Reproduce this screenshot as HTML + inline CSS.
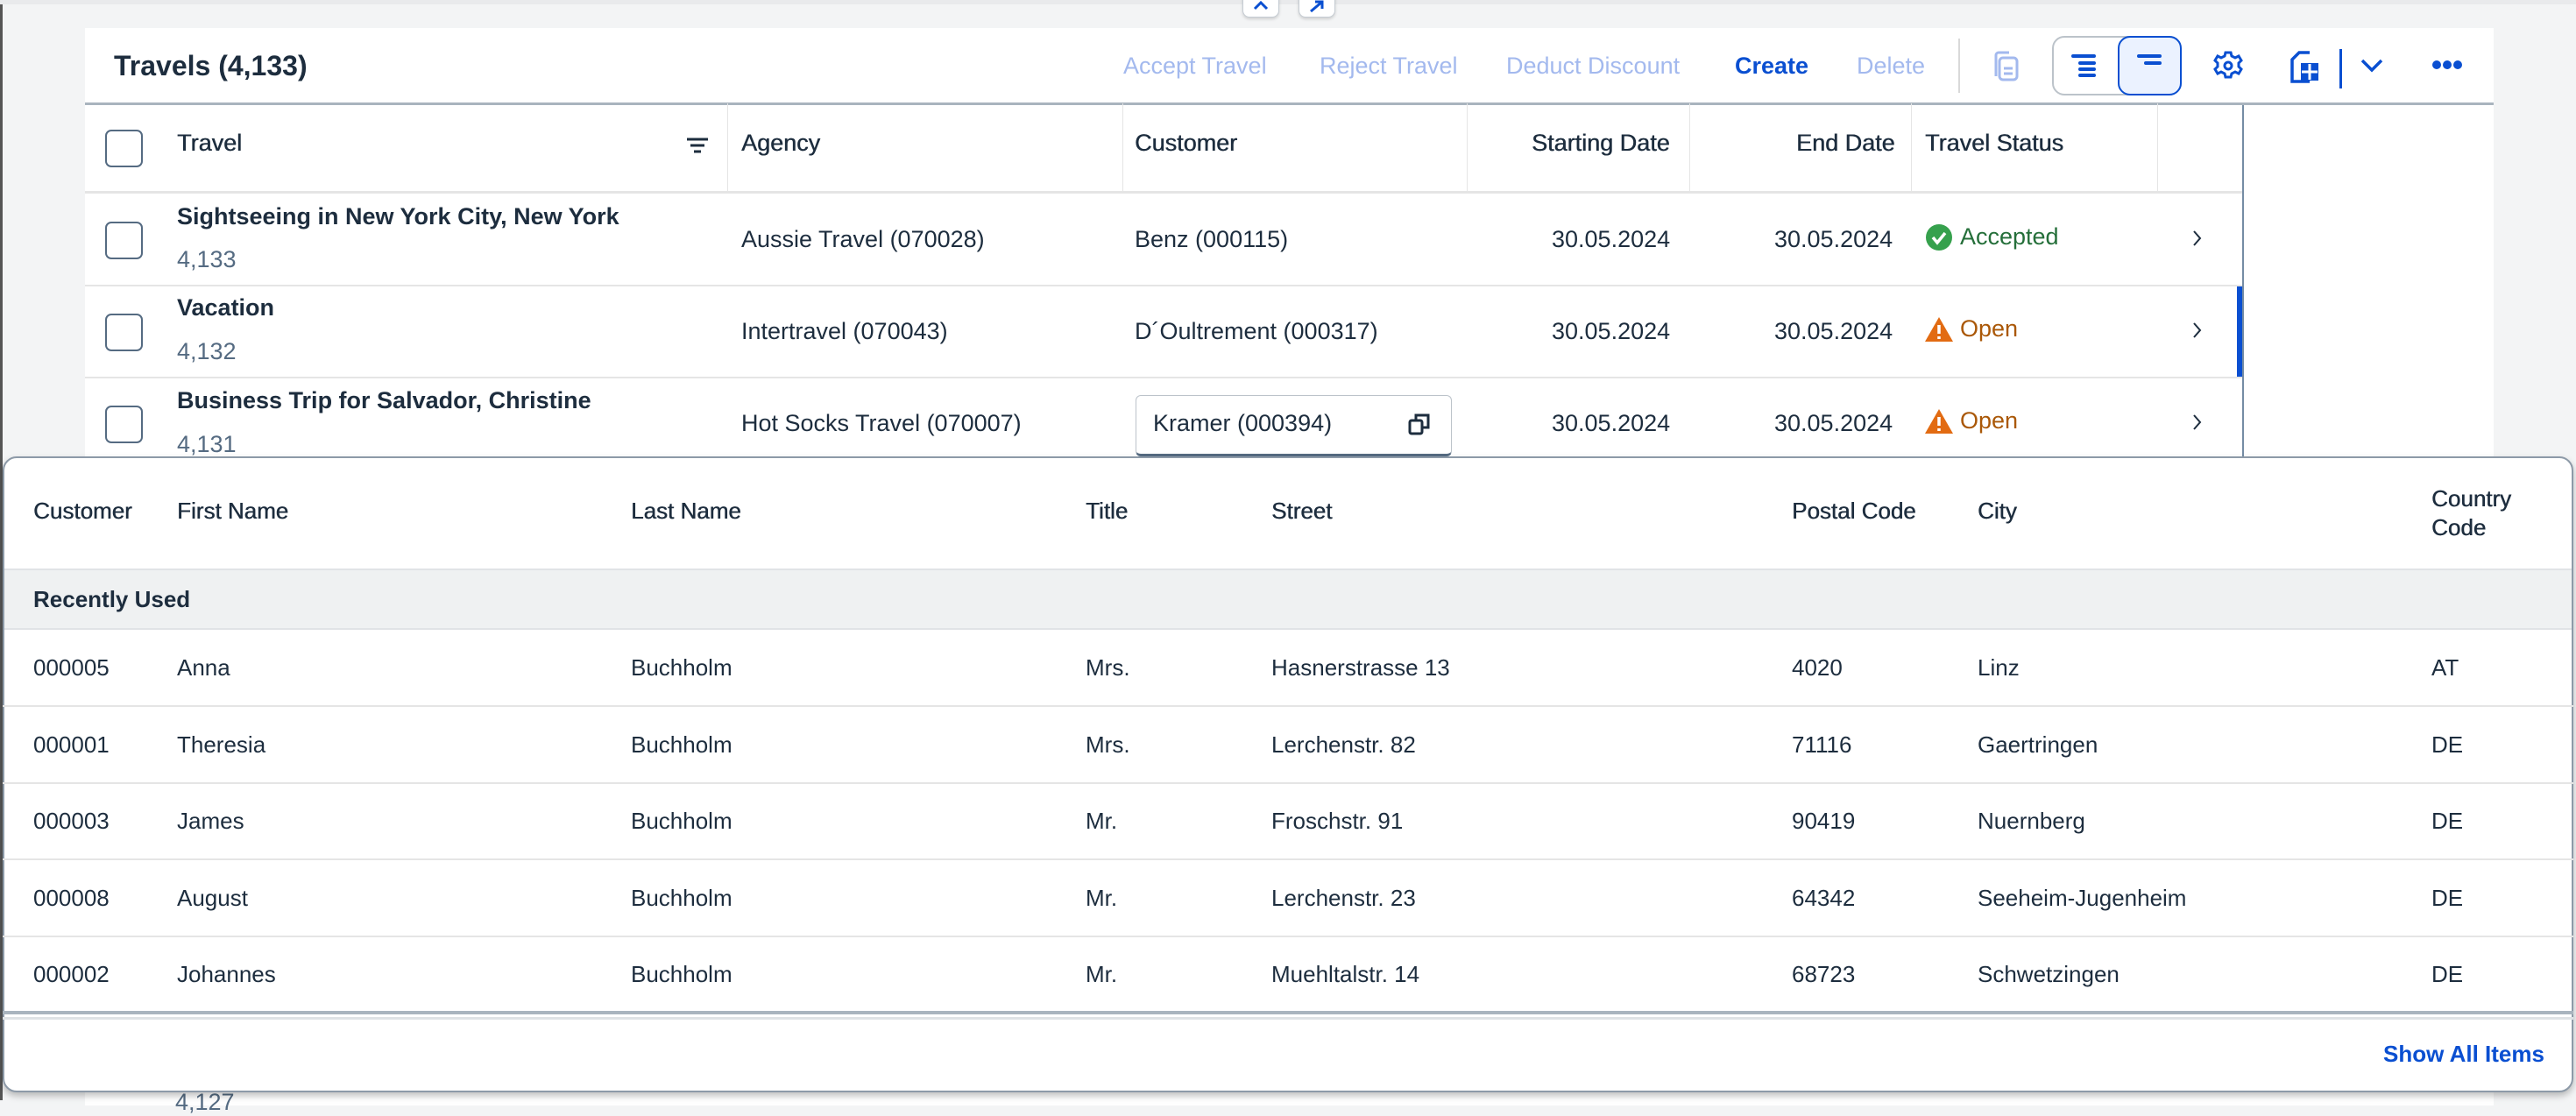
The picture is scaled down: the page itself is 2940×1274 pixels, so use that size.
<!DOCTYPE html>
<html><head><meta charset="utf-8"><style>
*{box-sizing:border-box;margin:0;padding:0}
body{width:2940px;height:1256px;overflow:hidden;background:#f3f4f5;font-family:"Liberation Sans",Arial,sans-serif;color:#1d2d3e;position:relative;font-size:27px}
.a{position:absolute;white-space:nowrap}
.card{position:absolute;left:97px;top:32px;width:2749px;height:1230px;background:#fff}
.tb{color:#a3b9ee;font-size:27px}
.hl{position:absolute;top:118px;height:101px;width:1px;background:#e5e5e5}
.cb{position:absolute;left:120px;width:43px;height:43px;border:2px solid #556b82;border-radius:7px;background:#fff}
.rs{position:absolute;left:97px;width:2462px;height:2px;background:#e5e5e5}
.ph{position:absolute;top:568px;font-size:26px;text-shadow:0.5px 0 0 #1d2d3e}
.th{text-shadow:0.5px 0 0 #1d2d3e}
.pr{position:absolute;left:3px;width:2934px;height:2px;background:#e5e5e5}
</style></head><body>
<div class="a" style="left:0;top:0;width:3px;height:1256px;background:#555"></div>
<div class="a" style="left:0;top:0;width:2940px;height:5px;background:#e9eaec"></div>
<div class="card"></div>
<div class="a" style="left:1418px;top:-10px;width:42px;height:30px;background:#fff;border:1px solid #c5ccd3;border-radius:8px;box-shadow:0 2px 3px rgba(0,0,0,.15)"></div>
<svg class="a" style="left:1429px;top:0px" width="20" height="12" fill="none" stroke="#0a4fd1" stroke-width="3"><path d="M3 10l7-7 7 7"/></svg>
<div class="a" style="left:1482px;top:-10px;width:42px;height:30px;background:#fff;border:1px solid #c5ccd3;border-radius:8px;box-shadow:0 2px 3px rgba(0,0,0,.15)"></div>
<svg class="a" style="left:1493px;top:0px" width="20" height="14" fill="none" stroke="#0a4fd1" stroke-width="3"><path d="M3 13l13-11M8 2h8v8"/></svg>
<div class="a" style="left:130px;top:57px;font-size:32px;font-weight:bold">Travels (4,133)</div>
<div class="a tb" style="left:1282px;top:60px">Accept Travel</div>
<div class="a tb" style="left:1506px;top:60px">Reject Travel</div>
<div class="a tb" style="left:1719px;top:60px">Deduct Discount</div>
<div class="a" style="left:1980px;top:60px;color:#0a4fd1;font-weight:bold;font-size:27px">Create</div>
<div class="a tb" style="left:2119px;top:60px">Delete</div>
<div class="a" style="left:2235px;top:44px;width:2px;height:62px;background:#d9d9d9"></div>
<svg class="a" style="left:2272px;top:57px" width="34" height="36" viewBox="0 0 34 36" fill="none" stroke="#a3b9ee" stroke-width="3"><path d="M6 30V6a3 3 0 0 1 3-3h12"/><rect x="10" y="9" width="20" height="25" rx="4"/><path d="M15 21h10M15 27h10"/></svg>
<div class="a" style="left:2342px;top:41px;width:148px;height:68px;border:2px solid #bcc3ca;border-radius:14px"></div>
<div class="a" style="left:2417px;top:41px;width:73px;height:68px;border:2px solid #0a4fd1;border-radius:14px;background:#ebf2ff"></div>
<svg class="a" style="left:2360px;top:60px" width="40" height="30" viewBox="0 0 40 30" stroke="#0a4fd1" stroke-width="4" stroke-linecap="round"><path d="M6 4h24M14 12h16M14 19h16M14 26h16"/></svg>
<svg class="a" style="left:2435px;top:60px" width="40" height="30" viewBox="0 0 40 30" stroke="#0a4fd1" stroke-width="4" stroke-linecap="round"><path d="M6 4h24M14 12h16"/></svg>
<svg class="a" style="left:2525px;top:57px" width="36" height="36" viewBox="0 0 36 36" fill="none" stroke="#0a4fd1" stroke-width="3"><path d="M15 3h6l1 4 4 2 4-2 3 5-3 3v4l3 3-3 5-4-2-4 2-1 4h-6l-1-4-4-2-4 2-3-5 3-3v-4l-3-3 3-5 4 2 4-2z"/><circle cx="18" cy="18" r="4"/></svg>
<svg class="a" style="left:2612px;top:56px" width="36" height="40" viewBox="0 0 36 40" fill="none" stroke="#0a4fd1" stroke-width="3.5"><path d="M24 4H12L4 12v25h20"/><rect x="14" y="16" width="20" height="20" fill="#0a4fd1" stroke="none"/><path d="M24 17v18M15 26h18" stroke="#fff" stroke-width="3"/></svg>
<div class="a" style="left:2670px;top:56px;width:3px;height:45px;background:#0a4fd1"></div>
<svg class="a" style="left:2693px;top:66px" width="28" height="18" viewBox="0 0 28 18" fill="none" stroke="#0a4fd1" stroke-width="3.5"><path d="M3 3l11 11 11-11"/></svg>
<svg class="a" style="left:2776px;top:67px" width="34" height="14"><circle cx="5" cy="7" r="5" fill="#0a4fd1"/><circle cx="17" cy="7" r="5" fill="#0a4fd1"/><circle cx="29" cy="7" r="5" fill="#0a4fd1"/></svg>
<div class="a" style="left:97px;top:117px;width:2749px;height:3px;background:#a9b4be"></div>
<div class="hl" style="left:830px"></div><div class="hl" style="left:1281px"></div><div class="hl" style="left:1674px"></div><div class="hl" style="left:1928px"></div><div class="hl" style="left:2181px"></div><div class="hl" style="left:2462px"></div>
<div class="a" style="left:2559px;top:120px;width:2px;height:410px;background:#758ca4"></div>
<div class="rs" style="top:218px;height:3px"></div><div class="rs" style="top:325px"></div><div class="rs" style="top:430px"></div>
<div class="cb" style="top:148px"></div>
<div class="a th" style="left:202px;top:148px">Travel</div>
<svg class="a" style="left:782px;top:156px" width="28" height="20" stroke="#1d2d3e" stroke-width="3"><path d="M2 3h24M6 10h16M10 17h8"/></svg>
<div class="a th" style="left:846px;top:148px">Agency</div>
<div class="a th" style="left:1295px;top:148px">Customer</div>
<div class="a th" style="left:1748px;top:148px">Starting Date</div>
<div class="a th" style="left:2050px;top:148px">End Date</div>
<div class="a th" style="left:2197px;top:148px">Travel Status</div>
<div class="cb" style="top:253px"></div><div class="cb" style="top:358px"></div><div class="cb" style="top:463px"></div>
<div class="a" style="left:202px;top:232px;font-weight:bold">Sightseeing in New York City, New York</div>
<div class="a" style="left:202px;top:281px;color:#556b82">4,133</div>
<div class="a" style="left:202px;top:336px;font-weight:bold">Vacation</div>
<div class="a" style="left:202px;top:386px;color:#556b82">4,132</div>
<div class="a" style="left:202px;top:442px;font-weight:bold">Business Trip for Salvador, Christine</div>
<div class="a" style="left:202px;top:492px;color:#556b82">4,131</div>
<div class="a" style="left:846px;top:258px">Aussie Travel (070028)</div>
<div class="a" style="left:846px;top:363px">Intertravel (070043)</div>
<div class="a" style="left:846px;top:468px">Hot Socks Travel (070007)</div>
<div class="a" style="left:1295px;top:258px">Benz (000115)</div>
<div class="a" style="left:1295px;top:363px">D´Oultrement (000317)</div>
<div class="a" style="left:1296px;top:451px;width:361px;height:70px;border:1px solid #bcc3ca;border-bottom:3px solid #556b82;border-radius:6px;background:#fff"></div>
<div class="a" style="left:1316px;top:468px">Kramer (000394)</div>
<svg class="a" style="left:1606px;top:470px" width="28" height="28" fill="none" stroke="#1d2d3e" stroke-width="3"><rect x="3" y="10" width="14" height="15" rx="2"/><path d="M10 10V4h14v14h-7"/></svg>
<div class="a" style="left:1771px;top:258px">30.05.2024</div><div class="a" style="left:2025px;top:258px">30.05.2024</div>
<div class="a" style="left:1771px;top:363px">30.05.2024</div><div class="a" style="left:2025px;top:363px">30.05.2024</div>
<div class="a" style="left:1771px;top:468px">30.05.2024</div><div class="a" style="left:2025px;top:468px">30.05.2024</div>
<svg class="a" style="left:2197px;top:255px" width="32" height="32"><circle cx="16" cy="16" r="15" fill="#36a14d"/><path d="M9 16l5 6 9-11" stroke="#fff" stroke-width="3.5" fill="none"/></svg>
<div class="a" style="left:2237px;top:255px;color:#256f3a">Accepted</div>
<svg class="a" style="left:2196px;top:361px" width="34" height="30"><path d="M17 1L33 29H1z" fill="#e26b12"/><path d="M17 10v10M17 23v3" stroke="#fff" stroke-width="3.5"/></svg>
<div class="a" style="left:2237px;top:360px;color:#aa5808">Open</div>
<svg class="a" style="left:2196px;top:466px" width="34" height="30"><path d="M17 1L33 29H1z" fill="#e26b12"/><path d="M17 10v10M17 23v3" stroke="#fff" stroke-width="3.5"/></svg>
<div class="a" style="left:2237px;top:465px;color:#aa5808">Open</div>
<svg class="a" style="left:2501px;top:262px" width="12" height="20" fill="none" stroke="#1d2d3e" stroke-width="2"><path d="M3 2l7 8-7 8"/></svg>
<svg class="a" style="left:2501px;top:367px" width="12" height="20" fill="none" stroke="#1d2d3e" stroke-width="2"><path d="M3 2l7 8-7 8"/></svg>
<svg class="a" style="left:2501px;top:472px" width="12" height="20" fill="none" stroke="#1d2d3e" stroke-width="2"><path d="M3 2l7 8-7 8"/></svg>
<div class="a" style="left:2553px;top:327px;width:6px;height:103px;background:#0a4fd1"></div>
<div class="a" style="left:200px;top:1243px;color:#556b82;font-size:27px">4,127</div>
<div class="a" style="left:3px;top:521px;width:2934px;height:726px;background:#fff;border:2px solid #8d9aa8;border-radius:16px;box-shadow:0 4px 8px rgba(0,0,0,.25)"></div>
<div class="ph a" style="left:38px;top:568px">Customer</div>
<div class="ph a" style="left:202px;top:568px">First Name</div>
<div class="ph a" style="left:720px;top:568px">Last Name</div>
<div class="ph a" style="left:1239px;top:568px">Title</div>
<div class="ph a" style="left:1451px;top:568px">Street</div>
<div class="ph a" style="left:2045px;top:568px">Postal Code</div>
<div class="ph a" style="left:2257px;top:568px">City</div>
<div class="ph a" style="left:2775px;line-height:33px;top:553px">Country<br>Code</div>
<div class="a" style="left:5px;top:649px;width:2930px;height:70px;background:#eff1f2;border-top:2px solid #e0e3e6;border-bottom:2px solid #e0e3e6"></div>
<div class="a" style="left:38px;top:669px;font-weight:bold;font-size:26px">Recently Used</div>
<div class="pr" style="top:805px"></div><div class="pr" style="top:893px"></div><div class="pr" style="top:980px"></div><div class="pr" style="top:1068px"></div>
<div class="a" style="left:3px;top:1154px;width:2934px;height:4px;background:#a9b4be"></div>
<div class="a" style="left:3px;top:1161px;width:2934px;height:3px;background:#dfe2e5"></div>
<div class="a" style="left:2720px;top:1188px;color:#0a4fd1;font-weight:bold;font-size:26px">Show All Items</div>
<div style="font-size:26px">
<div class="a" style="left:38px;top:747px">000005</div><div class="a" style="left:202px;top:747px">Anna</div><div class="a" style="left:720px;top:747px">Buchholm</div><div class="a" style="left:1239px;top:747px">Mrs.</div><div class="a" style="left:1451px;top:747px">Hasnerstrasse 13</div><div class="a" style="left:2045px;top:747px">4020</div><div class="a" style="left:2257px;top:747px">Linz</div><div class="a" style="left:2775px;top:747px">AT</div>
<div class="a" style="left:38px;top:835px">000001</div><div class="a" style="left:202px;top:835px">Theresia</div><div class="a" style="left:720px;top:835px">Buchholm</div><div class="a" style="left:1239px;top:835px">Mrs.</div><div class="a" style="left:1451px;top:835px">Lerchenstr. 82</div><div class="a" style="left:2045px;top:835px">71116</div><div class="a" style="left:2257px;top:835px">Gaertringen</div><div class="a" style="left:2775px;top:835px">DE</div>
<div class="a" style="left:38px;top:922px">000003</div><div class="a" style="left:202px;top:922px">James</div><div class="a" style="left:720px;top:922px">Buchholm</div><div class="a" style="left:1239px;top:922px">Mr.</div><div class="a" style="left:1451px;top:922px">Froschstr. 91</div><div class="a" style="left:2045px;top:922px">90419</div><div class="a" style="left:2257px;top:922px">Nuernberg</div><div class="a" style="left:2775px;top:922px">DE</div>
<div class="a" style="left:38px;top:1010px">000008</div><div class="a" style="left:202px;top:1010px">August</div><div class="a" style="left:720px;top:1010px">Buchholm</div><div class="a" style="left:1239px;top:1010px">Mr.</div><div class="a" style="left:1451px;top:1010px">Lerchenstr. 23</div><div class="a" style="left:2045px;top:1010px">64342</div><div class="a" style="left:2257px;top:1010px">Seeheim-Jugenheim</div><div class="a" style="left:2775px;top:1010px">DE</div>
<div class="a" style="left:38px;top:1097px">000002</div><div class="a" style="left:202px;top:1097px">Johannes</div><div class="a" style="left:720px;top:1097px">Buchholm</div><div class="a" style="left:1239px;top:1097px">Mr.</div><div class="a" style="left:1451px;top:1097px">Muehltalstr. 14</div><div class="a" style="left:2045px;top:1097px">68723</div><div class="a" style="left:2257px;top:1097px">Schwetzingen</div><div class="a" style="left:2775px;top:1097px">DE</div>
</div>
</body></html>
